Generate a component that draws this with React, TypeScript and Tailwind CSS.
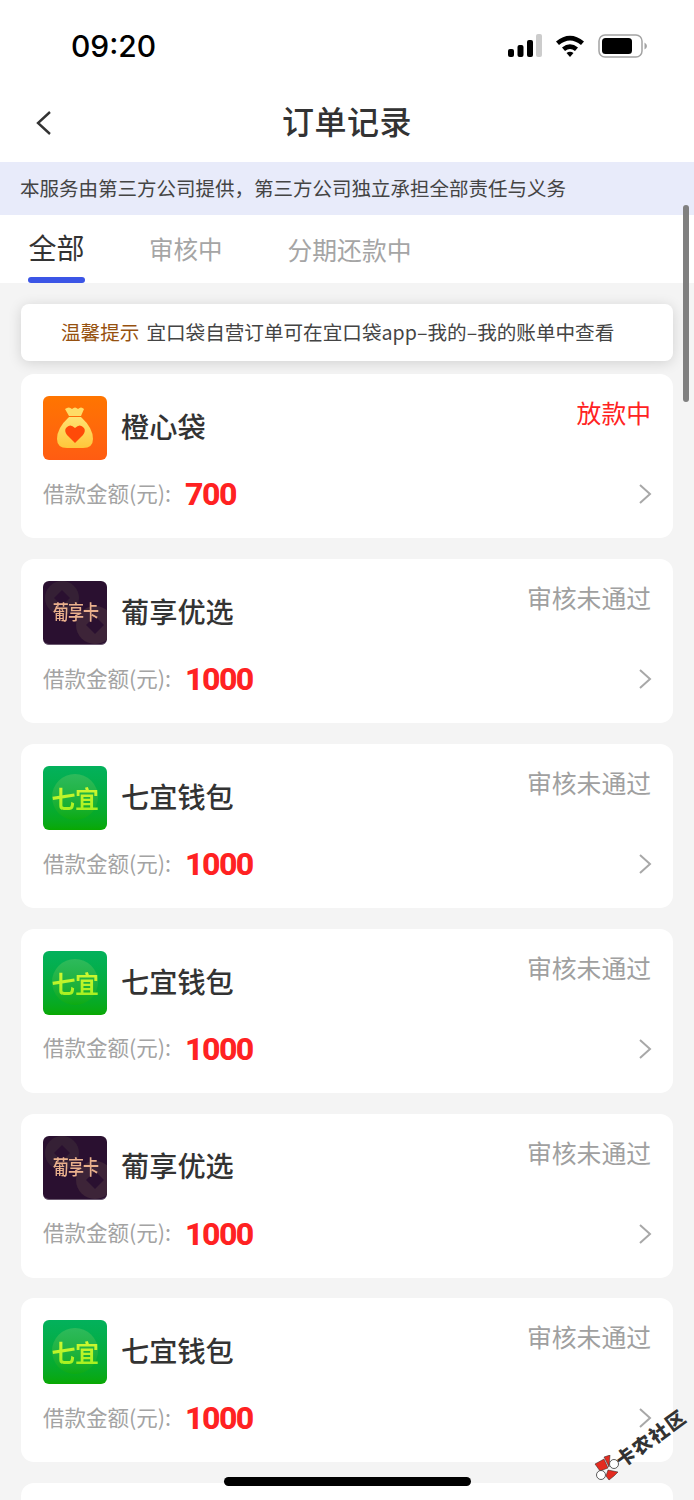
const orders = [
  { name: "橙心袋", status: "放款中", amount: "700", logo: "orange" },
  { name: "葡享优选", status: "审核未通过", amount: "1000", logo: "grape" },
  { name: "七宜钱包", status: "审核未通过", amount: "1000", logo: "qiyi" },
  { name: "七宜钱包", status: "审核未通过", amount: "1000", logo: "qiyi" },
  { name: "葡享优选", status: "审核未通过", amount: "1000", logo: "grape" },
  { name: "七宜钱包", status: "审核未通过", amount: "1000", logo: "qiyi" },
  { name: "", status: "", amount: "", logo: "" },
];

function OrangeLogo() {
  return (
    <div className="w-16 h-16 rounded-[6px] bg-gradient-to-b from-[#ff7500] to-[#ff5c12] flex items-center justify-center shrink-0">
      <svg width="64" height="64" viewBox="0 0 64 64">
        <defs>
          <linearGradient id="bag" x1="0" y1="0" x2="0" y2="1">
            <stop offset="0" stopColor="#ffe272" />
            <stop offset="1" stopColor="#ffc63a" />
          </linearGradient>
        </defs>
        <path d="M22 13 Q26 10 29 13 Q32 10 35 13 Q38 10 41 13 L38 20 H26 Z" fill="#ffdc66" />
        <path d="M26 21 H38 Q50 32 50 43 Q50 52 40 52 H24 Q14 52 14 43 Q14 32 26 21 Z" fill="url(#bag)" />
        <path d="M32 47 L24 39 Q21 35 23 32 Q27 27 32 32 Q37 27 41 32 Q43 35 40 39 Z" fill="#ff4a08" />
      </svg>
    </div>
  );
}

function GrapeLogo() {
  return (
    <div className="relative w-16 h-16 rounded-[6px] bg-[#2a1030] overflow-hidden flex items-center justify-center shrink-0 border-b border-[#6b5a70]">
      <svg className="absolute left-0 top-0" width="64" height="64" viewBox="0 0 64 64">
        <circle cx="19" cy="17" r="17" fill="#352035" />
        <path d="M19 9 L27 17 L19 25 L11 17 Z" fill="#2a1030" />
        <circle cx="52" cy="44" r="19" fill="#3d2438" />
        <path d="M52 35 L61 44 L52 53 L43 44 Z" fill="#2a1030" />
      </svg>
      <span className="relative text-[#eab18d] text-[20px] tracking-[-1px] font-medium leading-none scale-x-[0.8] whitespace-nowrap">葡享卡</span>
    </div>
  );
}

function QiyiLogo() {
  return (
    <div className="relative w-16 h-16 rounded-[6px] bg-gradient-to-b from-[#03b15c] to-[#09a800] overflow-hidden flex items-center justify-center shrink-0">
      <div className="absolute left-[9px] top-2 w-[46px] h-[46px] rounded-full bg-gradient-to-b from-[#2dba5c] to-[#0dab10]" />
      <span className="relative text-[24px] font-bold leading-none bg-gradient-to-b from-[#d2f832] to-[#a6f020] bg-clip-text text-transparent tracking-[-0.5px] whitespace-nowrap">七宜</span>
    </div>
  );
}

function Logo({ kind }: { kind: string }) {
  if (kind === "orange") return <OrangeLogo />;
  if (kind === "grape") return <GrapeLogo />;
  return <QiyiLogo />;
}

function OrderCard({ o }: { o: (typeof orders)[number] }) {
  return (
    <div className="h-[164px] shrink-0 bg-white rounded-[13px] px-[22px] pt-[22px]">
      {o.name && (
        <>
          <div className="flex items-start">
            <Logo kind={o.logo} />
            <div className="ml-[14px] h-[60px] flex items-center text-[28.200px] leading-none text-[#333333] font-medium">{o.name}</div>
            <div className={`ml-auto text-[24.800px] leading-none pt-[4px] ${o.status === "放款中" ? "text-[#ff2222]" : "text-[#a0a0a0]"}`}>{o.status}</div>
          </div>
          <div className="flex items-center mt-[16px] h-[36px]">
            <span className="w-[143px] text-[21.500px] text-[#a3a3a3] leading-none -mt-[3px]">借款金额(元):</span>
            <span className="text-[32px] font-extrabold text-[#ff2222] leading-none font-['Roboto',sans-serif] tracking-[-1.5px] -ml-[1px]">{o.amount}</span>
            <svg className="ml-auto mr-[-4px]" width="18" height="22" viewBox="0 0 18 22" fill="none" stroke="#a8a8a8" strokeWidth="2">
              <path d="M3 2 L13 11 L3 20" />
            </svg>
          </div>
        </>
      )}
    </div>
  );
}

export default function App() {
  return (
    <div className="relative w-[694px] h-[1500px] overflow-hidden bg-[#f4f4f4] font-['Noto_Sans_CJK_SC','Noto_Sans',sans-serif]">
      <div className="h-[90px] bg-white flex items-start justify-between pl-[71px] pr-[46px] pt-[28px]">
        <span className="text-[30px] leading-[37px] font-medium text-black font-['Inter',sans-serif]">09:20</span>
        <div className="flex items-center gap-[13px] pt-[6px]">
          <svg width="35" height="24" viewBox="0 0 35 24">
            <rect x="1" y="15" width="6" height="8" rx="2" fill="#000" />
            <rect x="10.500" y="11" width="6" height="12" rx="2" fill="#000" />
            <rect x="20" y="6" width="6" height="17" rx="2" fill="#000" />
            <rect x="29" y="0" width="6" height="23" rx="2" fill="#cccccc" />
          </svg>
          <svg width="30" height="24" viewBox="0 0 30 24" className="-mt-[1px]">
            <path d="M1 7.500 Q15 -4 29 7.500 L26 11 Q15 2 4 11 Z" fill="#000" />
            <path d="M7 13.500 Q15 7 23 13.500 L20 17 Q15 13 10 17 Z" fill="#000" />
            <path d="M11.500 19 Q15 16.500 18.500 19 L15 23 Z" fill="#000" />
          </svg>
          <svg width="50" height="24" viewBox="0 0 50 24">
            <rect x="1" y="1" width="43" height="22" rx="6" fill="none" stroke="#a3a3a3" strokeWidth="1.500" />
            <rect x="4" y="4" width="30" height="16" rx="3.500" fill="#000" />
            <path d="M46.500 8.500 Q49 10 49 12 Q49 14 46.500 15.500 Z" fill="#a3a3a3" />
          </svg>
        </div>
      </div>

      <div className="relative h-[72px] bg-white flex items-center justify-center">
        <svg className="absolute left-[35px] top-[20px]" width="18" height="26" viewBox="0 0 18 26" fill="none" stroke="#333333" strokeWidth="2.400">
          <path d="M15 2 L3 13 L15 24" />
        </svg>
        <span className="text-[32px] font-medium text-[#333333] leading-none tracking-[0.5px] -mt-[13px]">订单记录</span>
      </div>

      <div className="h-[53px] bg-[#e8ebfa] flex items-center pl-[20px] text-[19.500px] leading-none text-[#444444] pb-[2px]">
        {"本服务由第三方公司提供\uFF0C第三方公司独立承担全部责任与义务"}
      </div>

      <div className="relative h-[68px] bg-white">
        <div className="flex items-start pt-[16px] pl-[28px] gap-[65px]">
          <div className="flex flex-col items-center">
            <span className="text-[28px] leading-[32px] text-[#333333]">全部</span>
            <div className="mt-[14px] w-[57px] h-[6px] rounded-[3px] bg-[#3b55e6]" />
          </div>
          <span className="text-[24.500px] leading-[32px] text-[#a5a5a5] mt-[2px] -ml-[1px]">审核中</span>
          <span className="text-[24.800px] leading-[32px] text-[#a5a5a5] mt-[2px]">分期还款中</span>
        </div>
      </div>

      <div className="flex flex-col px-[21px] pt-[21px]">
        <div className="h-[57px] bg-white rounded-[8px] shadow-[0_2px_14px_rgba(0,0,0,0.14)] flex items-center pl-[40px] text-[19.600px] leading-none text-[#444444] pb-[2px]">
          <span className="text-[#96510f] mr-[7px]">温馨提示</span>
          <span>宜口袋自营订单可在宜口袋app–我的–我的账单中查看</span>
        </div>
        <div className="flex flex-col gap-[20.900px] mt-[13px]">
          {orders.map((o, i) => (
            <OrderCard key={i} o={o} />
          ))}
        </div>
      </div>

      <div className="absolute left-[683px] top-[205px] w-[6px] h-[197px] rounded-[3px] bg-[#808080]" />
      <div className="absolute left-[224px] top-[1477px] w-[247px] h-[9px] rounded-[5px] bg-black" />

      <div className="absolute left-[594px] top-[1455px] h-[26px] flex items-center -rotate-[36deg] origin-[13px_13px] whitespace-nowrap">
        <svg width="26" height="26" viewBox="0 0 26 26" className="rotate-[36deg] shrink-0">
          <path d="M1 9 L10 4 L14 13 L6 16 Z" fill="#e32b20" stroke="#222" strokeWidth="0.500" />
          <path d="M10 2 L16 0 L15 12 Z" fill="#e32b20" stroke="#222" strokeWidth="0.500" />
          <path d="M14 15 L24 17 L20 21 L15 25 L12 21 Z" fill="#e32b20" stroke="#222" strokeWidth="0.500" />
          <circle cx="20" cy="9" r="4.500" fill="#fff" stroke="#333" strokeWidth="0.800" />
          <circle cx="7" cy="20" r="4.500" fill="#fff" stroke="#333" strokeWidth="0.800" />
        </svg>
        <span className="text-[19px] leading-none font-black text-[#333333] tracking-[1.5px] -ml-[1px]">卡农社区</span>
      </div>
    </div>
  );
}
